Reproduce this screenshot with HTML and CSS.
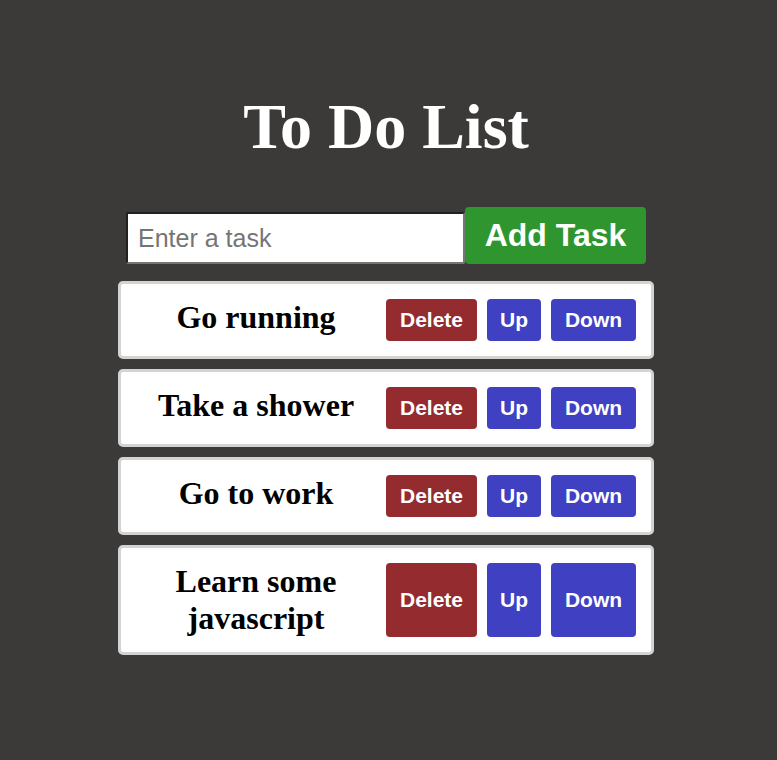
FILE: index.html
```html
<!DOCTYPE html>
<html>
<head>
<meta charset="utf-8">
<title>To Do List</title>
<link rel="stylesheet" href="styles.css">
</head>
<body>
<div class="app">
  <h1 class="title">To Do List</h1>
  <div class="entry">
    <input class="task-input" type="text" placeholder="Enter a task">
    <button class="add-btn">Add Task</button>
  </div>
  <ul class="list">
    <li class="item">
      <span class="item-text">Go running</span>
      <button class="btn btn-delete">Delete</button>
      <button class="btn btn-up">Up</button>
      <button class="btn btn-down">Down</button>
    </li>
    <li class="item">
      <span class="item-text">Take a shower</span>
      <button class="btn btn-delete">Delete</button>
      <button class="btn btn-up">Up</button>
      <button class="btn btn-down">Down</button>
    </li>
    <li class="item">
      <span class="item-text">Go to work</span>
      <button class="btn btn-delete">Delete</button>
      <button class="btn btn-up">Up</button>
      <button class="btn btn-down">Down</button>
    </li>
    <li class="item">
      <span class="item-text">Learn some javascript</span>
      <button class="btn btn-delete">Delete</button>
      <button class="btn btn-up">Up</button>
      <button class="btn btn-down">Down</button>
    </li>
  </ul>
</div>
</body>
</html>
```

FILE: styles.css
```css
html, body {
  margin: 0;
  padding: 0;
  background: #3b3a38;
}

body {
  font-family: "Liberation Serif", "Times New Roman", serif;
}

.app {
  width: 536px;
  margin-left: 118px;
  padding-top: 90px;
}

.title {
  margin: 0 0 43px;
  font-family: "Liberation Serif", "Times New Roman", serif;
  font-size: 64px;
  font-weight: bold;
  color: #ffffff;
  text-align: center;
}

.entry {
  display: flex;
  align-items: flex-end;
  justify-content: center;
}

.task-input {
  box-sizing: border-box;
  width: 339px;
  height: 52px;
  margin: 0;
  padding: 0 10px;
  border: 2px inset #767676;
  border-radius: 2px;
  background: #ffffff;
  font-family: "Liberation Sans", Arial, sans-serif;
  font-size: 25px;
  color: #000;
}

.task-input::placeholder {
  color: #757575;
}

.add-btn {
  box-sizing: border-box;
  width: 181px;
  height: 57px;
  margin: 0;
  padding: 0;
  border: none;
  border-radius: 4px;
  background: #2f962f;
  color: #ffffff;
  font-family: "Liberation Sans", Arial, sans-serif;
  font-size: 32px;
  font-weight: bold;
}

.list {
  list-style: none;
  margin: 17px 0 0;
  padding: 0;
}

.item {
  display: flex;
  gap: 10px;
  margin-bottom: 10px;
  padding: 15px;
  background: #ffffff;
  border: 3px solid #d3d3d3;
  border-radius: 5px;
}

.item-text {
  flex: 1;
  font-size: 32px;
  font-weight: bold;
  color: #000;
  text-align: center;
}

.btn {
  flex: none;
  min-height: 42px;
  margin: 0;
  padding: 0;
  border: none;
  border-radius: 4px;
  color: #ffffff;
  font-family: "Liberation Sans", Arial, sans-serif;
  font-size: 21px;
  font-weight: bold;
  text-align: center;
}

.btn-delete {
  width: 91px;
  background: #942b2e;
}

.btn-up {
  width: 54px;
  background: #4040c2;
}

.btn-down {
  width: 85px;
  background: #4040c2;
}
```
